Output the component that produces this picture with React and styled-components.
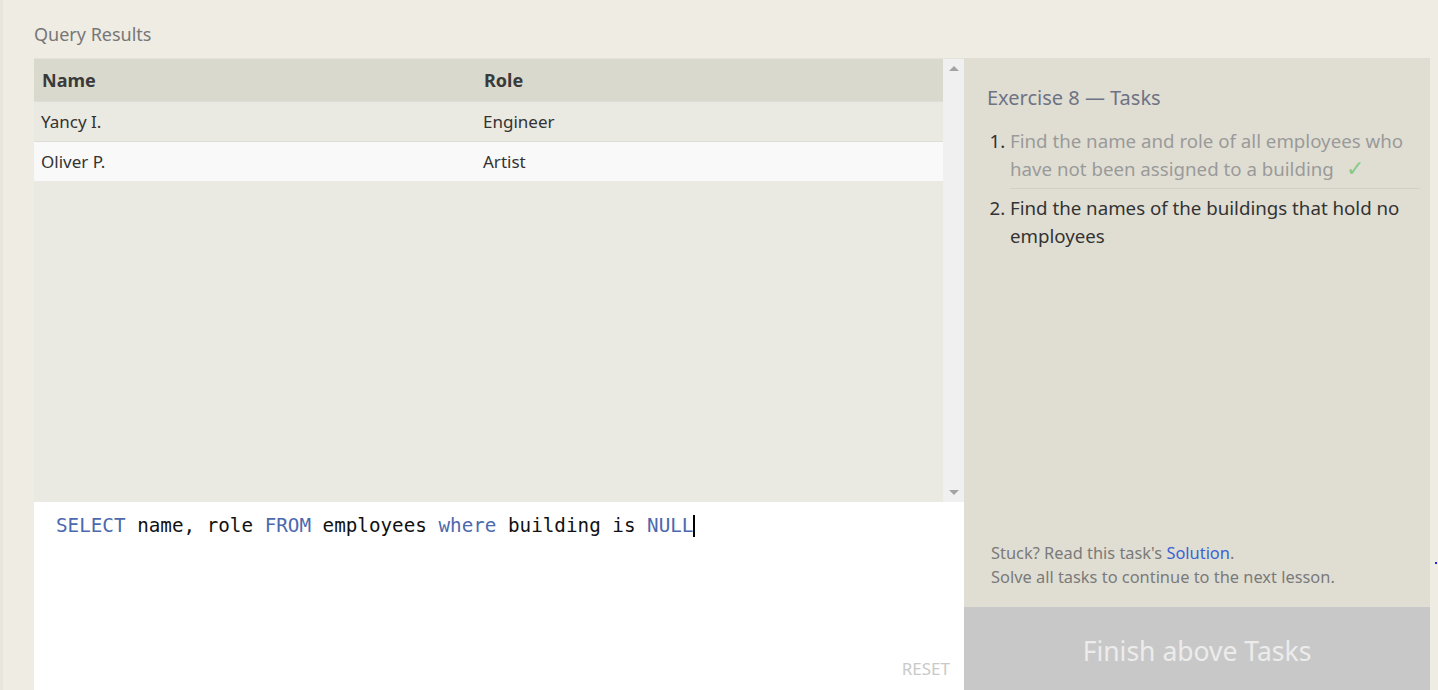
import React from 'react';
import styled, { createGlobalStyle } from 'styled-components';

const GlobalStyle = createGlobalStyle`
  html, body {
    margin: 0;
    padding: 0;
    background: #efece4;
    font-family: "Noto Sans", "Open Sans", sans-serif;
    overflow: hidden;
  }
`;

const Page = styled.div`
  width: 1438px;
  height: 690px;
  box-sizing: border-box;
  padding: 22px 8px 0 34px;
  border-left: 3px solid #e8e5dd;
  display: flex;
  flex-direction: column;
`;

const Heading = styled.div`
  font-size: 18px;
  color: #777;
  height: 36px;
  margin-left: -3px;
`;

const Main = styled.div`
  display: flex;
  flex: 1;
  min-height: 0;
  margin-left: -3px;
`;

const LeftCol = styled.div`
  width: 930px;
  display: flex;
  flex-direction: column;
`;

const Results = styled.div`
  height: 443px;
  display: flex;
  background: #eae9e2;
  border-top: 1px solid #e4e2db;
`;

const Table = styled.table`
  flex: 1;
  border-collapse: collapse;
  align-self: flex-start;
  font-size: 17px;
  color: #333;
`;

const Th = styled.th`
  text-align: left;
  font-weight: 700;
  font-size: 18px;
  color: #3a3a3a;
  background: #d9d9ce;
  height: 42px;
  padding: 0 8px;
  width: ${p => p.$w || 'auto'};
`;

const Tr = styled.tr`
  background: ${p => (p.$alt ? '#f9f9f9' : '#eae9e2')};
  border-top: 1px solid #dddcd6;
`;

const Td = styled.td`
  height: 39px;
  padding: 0 8px 0 7px;
  font-size: 17px;
`;

const Scrollbar = styled.div`
  width: 21px;
  background: #f0f0f0;
  display: flex;
  flex-direction: column;
  justify-content: space-between;
  align-items: center;
  padding: 7px 0;
`;

const Arrow = styled.div`
  width: 0;
  height: 0;
  border-left: 5px solid transparent;
  border-right: 5px solid transparent;
  ${p => (p.$down ? 'border-top: 5px solid #a3a3a3;' : 'border-bottom: 5px solid #a3a3a3;')}
`;

const Editor = styled.div`
  flex: 1;
  background: #fff;
  position: relative;
  padding: 12px 22px;
  font-family: "DejaVu Sans Mono", "Liberation Mono", monospace;
  font-size: 19.25px;
  color: #111;
  white-space: pre;
`;

const Kw = styled.span`
  color: #4c69ad;
`;

const Caret = styled.span`
  display: inline-block;
  width: 2px;
  height: 22px;
  background: #000;
  vertical-align: -5px;
`;

const Reset = styled.div`
  position: absolute;
  right: 14px;
  bottom: 10px;
  font-family: "Noto Sans", sans-serif;
  font-size: 17px;
  color: #c9c9c9;
`;

const RightCol = styled.div`
  width: 466px;
  display: flex;
  flex-direction: column;
`;

const Tasks = styled.div`
  flex: 1;
  background: #e0ded3;
  padding: 26px 10px 18px 23px;
  display: flex;
  flex-direction: column;
`;

const TasksTitle = styled.div`
  font-size: 20px;
  color: #6e7384;
  margin-bottom: 16px;
`;

const List = styled.ol`
  margin: 0;
  padding: 0 0 0 23px;
  font-size: 18.7px;
  line-height: 28px;
`;

const Item = styled.li`
  color: ${p => (p.$done ? '#9a9a9a' : '#333')};
  padding: 0 0 5px 0;
  margin-bottom: 5px;
  border-bottom: ${p => (p.$done ? '1px solid #d2cfc4' : 'none')};
  &::marker {
    color: #333;
  }
`;

const Check = styled.span`
  color: #86c986;
  font-size: 22px;
  line-height: 1;
  margin-left: 12px;
`;

const Help = styled.div`
  margin-top: auto;
  padding-left: 4px;
  font-size: 16.4px;
  line-height: 24px;
  color: #7a7a7a;
`;

const Link = styled.span`
  color: #3a62d8;
`;

const FinishButton = styled.div`
  height: 83px;
  box-sizing: border-box;
  padding-top: 4px;
  background: #c8c8c8;
  color: #ececec;
  font-size: 26.5px;
  display: flex;
  align-items: center;
  justify-content: center;
`;

const Dot = styled.div`
  position: absolute;
  left: 1435px;
  top: 562px;
  width: 2px;
  height: 2px;
  background: #2020ff;
`;

export default function App() {
  return (
    <>
      <GlobalStyle />
      <Page>
        <Heading>Query Results</Heading>
        <Main>
          <LeftCol>
            <Results>
              <Table>
                <thead>
                  <tr>
                    <Th $w="426px">Name</Th>
                    <Th>Role</Th>
                  </tr>
                </thead>
                <tbody>
                  <Tr>
                    <Td>Yancy I.</Td>
                    <Td>Engineer</Td>
                  </Tr>
                  <Tr $alt>
                    <Td>Oliver P.</Td>
                    <Td>Artist</Td>
                  </Tr>
                </tbody>
              </Table>
              <Scrollbar>
                <Arrow />
                <Arrow $down />
              </Scrollbar>
            </Results>
            <Editor>
              <Kw>SELECT</Kw> name, role <Kw>FROM</Kw> employees <Kw>where</Kw> building is <Kw>NULL</Kw>
              <Caret />
              <Reset>RESET</Reset>
            </Editor>
          </LeftCol>
          <RightCol>
            <Tasks>
              <TasksTitle>Exercise 8 — Tasks</TasksTitle>
              <List>
                <Item $done>
                  Find the name and role of all employees who have not been assigned to a building
                  <Check>✓</Check>
                </Item>
                <Item>Find the names of the buildings that hold no employees</Item>
              </List>
              <Help>
                Stuck? Read this task's <Link>Solution</Link>.
                <br />
                Solve all tasks to continue to the next lesson.
              </Help>
            </Tasks>
            <FinishButton>Finish above Tasks</FinishButton>
          </RightCol>
        </Main>
      </Page>
      <Dot />
    </>
  );
}
